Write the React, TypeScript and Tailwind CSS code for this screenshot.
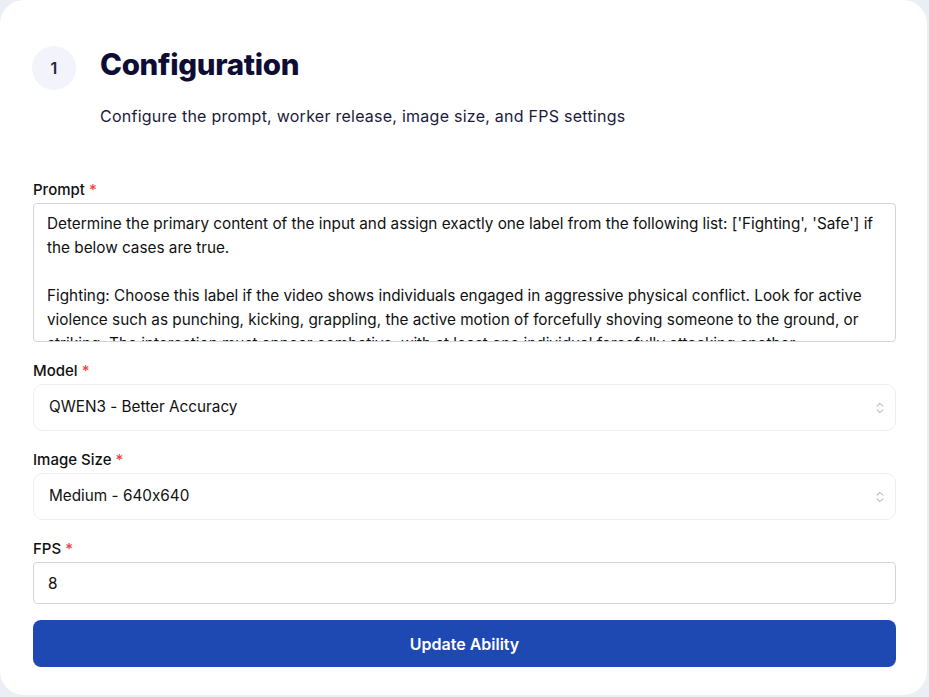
import { ChevronsUpDown } from 'lucide-react'

const PROMPT = `Determine the primary content of the input and assign exactly one label from the following list: ['Fighting', 'Safe'] if the below cases are true.

Fighting: Choose this label if the video shows individuals engaged in aggressive physical conflict. Look for active violence such as punching, kicking, grappling, the active motion of forcefully shoving someone to the ground, or striking. The interaction must appear combative, with at least one individual forcefully attacking another.

Safe: Choose this label if none of the above is present.`

function Label({ text }: { text: string }) {
    return (
        <div className="text-[15px] font-medium text-[#111] leading-5 mb-[3px]">
            {text} <span className="text-[#ef4444]">*</span>
        </div>
    )
}

function FakeSelect({ value }: { value: string }) {
    return (
        <div className="h-[47px] w-full border border-[#eceef5] rounded-[10px] flex items-center justify-between pl-[15px] pr-[8px] text-[15.3px] text-[#111]">
            <span>{value}</span>
            <ChevronsUpDown size={14} strokeWidth={1.5} className="text-[#8a8f99]" />
        </div>
    )
}

export default function App() {
    return (
        <div className="min-h-screen bg-[#eceef6] font-['Inter',sans-serif] [font-feature-settings:'calt'_0]">
            <div className="w-[927px] h-[695px] bg-white rounded-[24px] pl-[32px] pr-[31px] pt-[46px]">
                <div className="flex gap-6">
                    <div className="w-11 h-11 rounded-full bg-[#f3f4fb] flex items-center justify-center text-[16px] font-semibold text-[#23233f] shrink-0">
                        1
                    </div>
                    <div>
                        <h1 className="text-[29.5px] font-extrabold text-[#0e0d35] leading-9 tracking-[-0.3px]">
                            Configuration
                        </h1>
                        <p className="mt-[24px] text-[16px] text-[#1b1a3d] leading-5 tracking-[0.25px]">
                            Configure the prompt, worker release, image size, and FPS settings
                        </p>
                    </div>
                </div>

                <div className="mt-[54px] pl-[1px]">
                    <Label text="Prompt" />
                    <textarea
                        readOnly
                        value={PROMPT}
                        className="block w-full h-[139px] border border-[#d1d5db] rounded-[4px] pl-[13px] pr-3 pt-[8px] text-[15.3px] leading-6 text-[#111] resize-none overflow-hidden outline-none"
                    />

                    <div className="mt-[19px]">
                        <Label text="Model" />
                        <FakeSelect value="QWEN3 - Better Accuracy" />
                    </div>

                    <div className="mt-[19px]">
                        <Label text="Image Size" />
                        <FakeSelect value="Medium - 640x640" />
                    </div>

                    <div className="mt-[19px]">
                        <Label text="FPS" />
                        <input
                            readOnly
                            value="8"
                            className="block w-full h-[42px] border border-[#d1d5db] rounded-[4px] px-[14px] text-[15.3px] text-[#111] outline-none"
                        />
                    </div>

                    <button className="mt-4 w-full h-[47px] rounded-[8px] bg-[#1e48b2] text-white text-[16px] font-semibold">
                        Update Ability
                    </button>
                </div>
            </div>
        </div>
    )
}
